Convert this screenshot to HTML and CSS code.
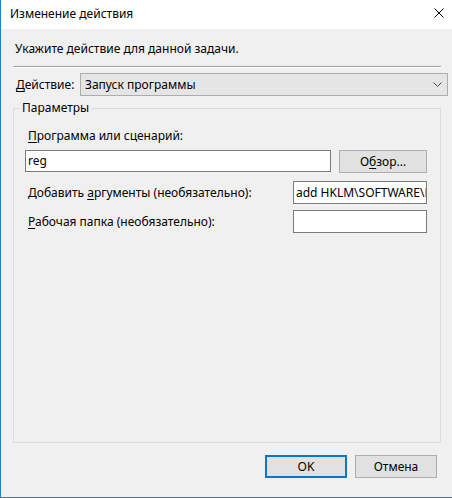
FILE: index.html
```html
<!DOCTYPE html>
<html lang="ru">
<head>
<meta charset="utf-8">
<title>Изменение действия</title>
<link rel="stylesheet" href="styles.css">
</head>
<body>
<div class="window">
  <div class="titlebar">
    <span class="title">Изменение действия</span>
    <svg class="close" width="10" height="10" viewBox="0 0 10 10"><path d="M0.5 0.5 L9.5 9.5 M9.5 0.5 L0.5 9.5" stroke="#000" stroke-width="1" fill="none"/></svg>
  </div>
  <div class="content">
    <div class="instr">Укажите действие для данной задачи.</div>
    <div class="separator"></div>
    <div class="combo-row">
      <span class="combo-label"><u>Д</u>ействие:</span>
      <div class="combo">
        <span class="combo-text">Запуск программы</span>
        <svg class="chevron" width="9" height="5" viewBox="0 0 9 5"><path d="M0.5 0.5 L4.5 4.5 L8.5 0.5" stroke="#5a3b3b" stroke-width="1" fill="none"/></svg>
      </div>
    </div>
    <fieldset class="group">
      <legend class="legend">Параметры</legend>
      <div class="field-label"><u>П</u>рограмма или сценарий:</div>
      <div class="prog-row">
        <div class="textbox wide">reg</div>
        <div class="button browse">О<u>б</u>зор...</div>
      </div>
      <div class="arg-row">
        <span class="row-label">Добавить <u>а</u>ргументы (необязательно):</span>
        <div class="textbox small">add HKLM\SOFTWARE\Microsoft</div>
      </div>
      <div class="arg-row second">
        <span class="row-label"><u>Р</u>абочая папка (необязательно):</span>
        <div class="textbox small"></div>
      </div>
    </fieldset>
    <div class="buttons">
      <div class="button ok">OK</div>
      <div class="button">Отмена</div>
    </div>
  </div>
</div>
</body>
</html>
```
FILE: styles.css
```css
html, body {
  margin: 0;
  padding: 0;
}
body {
  width: 452px;
  height: 498px;
  overflow: hidden;
  background: #f0f0f0;
  font-family: "Noto Sans", "Liberation Sans", sans-serif;
  font-size: 12px;
  line-height: 16px;
  color: #000;
}
u {
  text-decoration: underline;
  text-underline-offset: 2px;
}
.window {
  width: 452px;
  height: 498px;
  box-sizing: border-box;
  border-left: 1px solid #1883d7;
  border-bottom: 1px solid #1883d7;
  display: flex;
  flex-direction: column;
}
.titlebar {
  height: 29px;
  background: #fff;
  display: flex;
  align-items: center;
  justify-content: space-between;
  padding: 0 8px 0 9px;
}
.title {
  margin-top: -2px;
}
.close {
  display: block;
  margin-top: -3px;
}
.content {
  flex: 1;
  display: flex;
  flex-direction: column;
  padding: 12px 0 0 12px;
}
.instr {
  margin-left: 2px;
}
.separator {
  width: 428px;
  height: 0;
  border-top: 1px solid #a0a0a0;
  border-bottom: 1px solid #fff;
  margin-top: 9px;
}
.combo-row {
  display: flex;
  align-items: center;
  margin-top: 5px;
  height: 23px;
}
.combo-label {
  width: 64px;
  padding-left: 3px;
}
.combo {
  width: 368px;
  height: 23px;
  box-sizing: border-box;
  border: 1px solid #adadad;
  background: #e5e5e5;
  display: flex;
  align-items: center;
  justify-content: space-between;
  padding: 0 5px 0 4px;
}
.chevron {
  display: block;
  margin-top: -1px;
}
.group {
  margin: 4px 0 0 0;
  width: 428px;
  height: 343px;
  box-sizing: border-box;
  border: 1px solid #dcdcdc;
  padding: 14px 0 0 11px;
  min-width: 0;
}
.legend {
  padding: 0 2px;
  margin-left: -5px;
  line-height: 16px;
}
.field-label {
  margin-left: 3px;
  margin-top: -2px;
}
.prog-row {
  display: flex;
  gap: 8px;
  margin-top: 6px;
  align-items: flex-start;
}
.textbox {
  box-sizing: border-box;
  border: 1px solid #7a7a7a;
  background: #fff;
  padding: 0 2px;
  display: flex;
  align-items: center;
  overflow: hidden;
  white-space: nowrap;
}
.wide {
  width: 306px;
  height: 22px;
}
.small {
  width: 134px;
  height: 23px;
}
.button {
  box-sizing: border-box;
  width: 82px;
  height: 23px;
  border: 1px solid #adadad;
  background: #e1e1e1;
  display: flex;
  align-items: center;
  justify-content: center;
}
.browse {
  width: 88px;
}
.arg-row {
  display: flex;
  align-items: center;
  justify-content: space-between;
  width: 402px;
  margin-top: 8px;
}
.arg-row.second {
  margin-top: 6px;
}
.row-label {
  margin-left: 3px;
}
.buttons {
  display: flex;
  justify-content: flex-end;
  gap: 8px;
  margin-top: 12px;
  padding-right: 15px;
}
.ok {
  border: 2px solid #0078d7;
}
```
